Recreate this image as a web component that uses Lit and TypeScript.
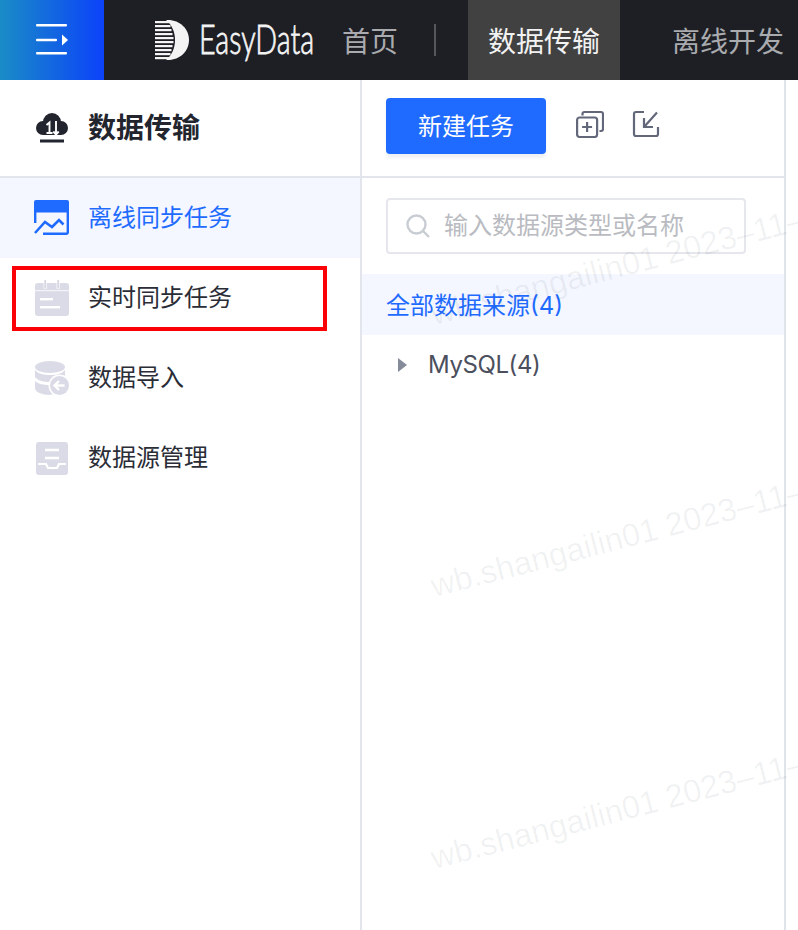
import { LitElement, html, css, svg } from "lit";
import { customElement } from "lit/decorators.js";

const stripes = [21, 25, 29, 33, 37, 41, 45, 49, 53, 57];

@customElement("app-root")
export class AppRoot extends LitElement {
  static styles = css`
    :host {
      display: block;
      position: relative;
      width: 798px;
      height: 930px;
      overflow: hidden;
      background: #fff;
      font-family: "Noto Sans CJK SC", "Inter", sans-serif;
      color: #22252e;
    }
    svg { display: block; flex: none; }
    .header {
      display: flex;
      align-items: center;
      height: 80px;
      background: #1e1f25;
      overflow: hidden;
    }
    .menu-btn {
      flex: none;
      width: 104px;
      height: 80px;
      display: flex;
      align-items: center;
      justify-content: center;
      background: linear-gradient(90deg, #1a8cc6 0%, #0c42fa 100%);
    }
    .brand {
      flex: none;
      width: 238px;
      box-sizing: border-box;
      padding-left: 51px;
      display: flex;
      align-items: center;
      gap: 10px;
    }
    .brand-name {
      display: block;
      font-family: "Lato", sans-serif;
      font-weight: 300;
      font-size: 41px;
      line-height: 48px;
      padding-bottom: 3px;
      color: #f4f4f4;
      white-space: nowrap;
      transform: scaleX(0.7);
      transform-origin: 0 50%;
      -webkit-text-stroke: 0.8px #f4f4f4;
    }
    .nav-item {
      flex: none;
      font-size: 28px;
      line-height: 80px;
      color: #a9abae;
      white-space: nowrap;
    }
    .nav-sep {
      flex: none;
      width: 2px;
      height: 32px;
      margin: 0 32px 0 36px;
      background: #55575c;
    }
    .nav-item.active {
      padding: 0 20px;
      background: #414141;
      color: #f2f2f2;
      margin-right: 52px;
    }
    .body { display: flex; height: 850px; }
    .sidebar {
      flex: none;
      width: 360px;
      border-right: 2px solid #e3e5ec;
    }
    .side-head {
      height: 96px;
      box-sizing: border-box;
      display: flex;
      align-items: center;
      gap: 20px;
      padding-left: 36px;
      font-size: 28px;
      font-weight: 600;
      color: #22252e;
    }
    .side-head span { padding-bottom: 5px; }
    .rule { height: 2px; background: #e3e5ec; }
    .side-item {
      height: 80px;
      display: flex;
      align-items: center;
      gap: 18px;
      padding-left: 34px;
      font-size: 24px;
      color: #2a2d36;
    }
    .side-item span { padding-bottom: 5px; }
    .side-item.active { background: #f4f7ff; color: #1f6bff; }
    .panel {
      flex: none;
      width: 422px;
      border-right: 2px solid #dfe3ea;
    }
    .toolbar {
      height: 96px;
      box-sizing: border-box;
      display: flex;
      align-items: flex-start;
      padding: 18px 0 0 24px;
    }
    .primary {
      flex: none;
      width: 160px;
      height: 56px;
      border: 0;
      padding: 0 0 4px;
      border-radius: 4px;
      background: #1f6bff;
      color: #fff;
      font: inherit;
      font-size: 24px;
      text-align: center;
      box-shadow: 0 4px 3px rgba(31, 50, 90, 0.07);
    }
    .tool-a { margin: 12px 0 0 30px; }
    .tool-b { margin: 12px 0 0 28px; }
    .search-wrap { padding: 20px 38px 20px 24px; }
    .search {
      height: 56px;
      box-sizing: border-box;
      border: 2px solid #e5e7ed;
      border-radius: 4px;
      display: flex;
      align-items: center;
      gap: 14px;
      padding-left: 18px;
      font-size: 24px;
      color: #b9bbc1;
    }
    .search span { padding-bottom: 5px; }
    .tree-all {
      height: 61px;
      display: flex;
      align-items: center;
      padding-left: 24px;
      background: #f4f7ff;
      color: #1f6bff;
      font-family: "Inter", "Noto Sans CJK SC", sans-serif;
      font-size: 24px;
    }
    .tree-all span { padding-bottom: 3px; }
    .tree-row {
      height: 60px;
      display: flex;
      align-items: center;
      gap: 21px;
      padding-left: 36px;
      font-size: 24px;
      color: #4b4f5d;
    }
    .tree-label {
      font-family: "Inter", "Noto Sans CJK SC", sans-serif;
      letter-spacing: -0.4px;
      padding-bottom: 1px;
    }
    .mark {
      position: absolute;
      left: 12px;
      top: 266px;
      width: 315px;
      height: 65px;
      box-sizing: border-box;
      border: 4px solid #fb0006;
      pointer-events: none;
    }
    .wm {
      position: absolute;
      left: 436px;
      font-family: "Liberation Sans", sans-serif;
      font-size: 32.5px;
      line-height: 36px;
      color: rgba(30, 35, 50, 0.06);
      white-space: nowrap;
      transform: rotate(-14.5deg);
      transform-origin: 0 100%;
      pointer-events: none;
    }
    .wm-1 { top: 296px; }
    .wm-2 { top: 568px; }
    .wm-3 { top: 840px; }
  `;

  render() {
    return html`
      <div class="header">
        <div class="menu-btn">
          <svg width="32" height="32" viewBox="0 0 32 32" fill="#fff">
            <rect x="0" y="0" width="31" height="2.6" rx="1"></rect>
            <rect x="0" y="14.700" width="21" height="2.6" rx="1"></rect>
            <rect x="0" y="28" width="31" height="2.6" rx="1"></rect>
            <path d="M26 10.500l6 5.500-6 5.500z"></path>
          </svg>
        </div>
        <div class="brand">
          <svg width="34" height="42" viewBox="155 18 34 42">
            <path d="M155 19h13c12 0 21 9 21 20s-9 20-21 20h-13z" fill="#f4f4f4"></path>
            <path d="M166 19c6 5 9 12 9 20s-3 15-9 20h-11V19z" fill="#1e1f25"></path>
            ${stripes.map(
              (y) => svg`<rect x="155" y=${y - 1} width=${19 - Math.abs(y - 39) * 0.25} height="2.2" fill="#f4f4f4"></rect>`
            )}
          </svg>
          <span class="brand-name">EasyData</span>
        </div>
        <div class="nav-item">首页</div>
        <div class="nav-sep"></div>
        <div class="nav-item active">数据传输</div>
        <div class="nav-item">离线开发</div>
      </div>
      <div class="body">
        <aside class="sidebar">
          <div class="side-head">
            <svg width="32" height="32" viewBox="0 0 32 32">
              <g fill="#22252e">
                <circle cx="7" cy="16" r="7"></circle>
                <circle cx="25" cy="16" r="7"></circle>
                <circle cx="16" cy="10" r="9"></circle>
                <rect x="7" y="12" width="18" height="11"></rect>
                <rect x="4" y="27.500" width="24" height="3"></rect>
              </g>
              <path d="M10.500 13l3-2.500V21M10.500 21h6M20 9v13.500M17.300 19.500l2.700 3 2.700-3" fill="none" stroke="#fff" stroke-width="1.900"></path>
            </svg>
            <span>数据传输</span>
          </div>
          <div class="rule"></div>
          <div class="side-item active">
            <svg width="36" height="36" viewBox="0 0 36 36">
              <path d="M0 2a2 2 0 0 1 2-2h31a2 2 0 0 1 2 2v10.500H0z" fill="#1f6bff"></path>
              <path d="M1.200 12v11M33.800 12v20a1.500 1.500 0 0 1-1.500 1.800H9" fill="none" stroke="#1f6bff" stroke-width="2.400"></path>
              <path d="M1 33l10-11 7 5 7-7 4.500 4.500" fill="none" stroke="#1f6bff" stroke-width="2.600"></path>
            </svg>
            <span>离线同步任务</span>
          </div>
          <div class="side-item">
            <svg width="36" height="36" viewBox="0 0 36 36">
              <rect x="1" y="3" width="34" height="33" rx="3" fill="#dadbe6"></rect>
              <rect x="1" y="10" width="34" height="1.200" fill="#fff" fill-opacity="0.7"></rect>
              <rect x="9.500" y="3" width="3.400" height="6" fill="#fff" fill-opacity="0.8"></rect>
              <rect x="22.500" y="3" width="3.400" height="6" fill="#fff" fill-opacity="0.8"></rect>
              <rect x="10.300" y="0" width="1.800" height="8.500" fill="#d6d7e3"></rect>
              <rect x="23.300" y="0" width="1.800" height="8.500" fill="#d6d7e3"></rect>
              <rect x="6" y="18" width="13" height="2.400" fill="#fff"></rect>
              <rect x="6" y="26" width="20" height="2.400" fill="#fff"></rect>
            </svg>
            <span>实时同步任务</span>
          </div>
          <div class="side-item">
            <svg width="36" height="36" viewBox="0 0 36 36">
              <ellipse cx="16" cy="7" rx="15" ry="6" fill="#dadbe6"></ellipse>
              <path d="M1 10c3 4 9 5 15 5s12-1 15-5v7c-3 4-9 5-15 5S4 21 1 17z" fill="#dadbe6"></path>
              <path d="M1 21c3 3 9 4 14 4l4 9c-1 0-2 1-3 1-8 0-15-3-15-7z" fill="#dadbe6"></path>
              <circle cx="25.500" cy="25.500" r="11" fill="#fff"></circle>
              <circle cx="25.500" cy="25.500" r="9.500" fill="#dadbe6"></circle>
              <path d="M20.500 25.500h10M25 21l-4.500 4.500L25 30" fill="none" stroke="#fff" stroke-width="2.400"></path>
            </svg>
            <span>数据导入</span>
          </div>
          <div class="side-item">
            <svg width="36" height="36" viewBox="0 0 36 36">
              <rect x="2" y="2" width="32" height="33" rx="3" fill="#dadbe6"></rect>
              <path d="M11 10h14M11 18h14" stroke="#fff" stroke-width="2.400" fill="none"></path>
              <path d="M4 24h8l2 4h9l2-4h7" stroke="#fff" stroke-width="2.200" fill="none"></path>
            </svg>
            <span>数据源管理</span>
          </div>
        </aside>
        <section class="panel">
          <div class="toolbar">
            <button class="primary">新建任务</button>
            <svg class="tool-a" width="28" height="28" viewBox="0 0 28 28" fill="none" stroke="#626779" stroke-width="2.200">
              <rect x="1.100" y="7.500" width="20" height="19.500" rx="2.500"></rect>
              <path d="M6.500 5.500V4a2 2 0 0 1 2-2H25a2 2 0 0 1 2 2v15a2 2 0 0 1-2 2h-1.500"></path>
              <path d="M11.100 12v10M6.100 17h10"></path>
            </svg>
            <svg class="tool-b" width="28" height="28" viewBox="0 0 28 28" fill="none" stroke="#626779" stroke-width="2.200">
              <path d="M12 2H4a2 2 0 0 0-2 2v20a2 2 0 0 0 2 2h20a2 2 0 0 0 2-2v-7"></path>
              <path d="M25 2.500 12 17M12 8v9h9"></path>
            </svg>
          </div>
          <div class="rule"></div>
          <div class="search-wrap">
            <div class="search">
              <svg width="24" height="24" viewBox="0 0 24 24" fill="none" stroke="#c8ccd3" stroke-width="2.400">
                <circle cx="10.500" cy="10.500" r="9"></circle>
                <path d="M17 17l6 6"></path>
              </svg>
              <span>输入数据源类型或名称</span>
            </div>
          </div>
          <div class="tree-all"><span>全部数据来源(4)</span></div>
          <div class="tree-row">
            <svg width="9" height="14" viewBox="0 0 9 14"><path d="M0 0l9 7-9 7z" fill="#868b9a"></path></svg>
            <span class="tree-label">MySQL(4)</span>
          </div>
        </section>
      </div>
      <div class="mark"></div>
      <div class="wm wm-1">wb.shangailin01 2023–11–</div>
      <div class="wm wm-2">wb.shangailin01 2023–11–</div>
      <div class="wm wm-3">wb.shangailin01 2023–11–</div>
    `;
  }
}
